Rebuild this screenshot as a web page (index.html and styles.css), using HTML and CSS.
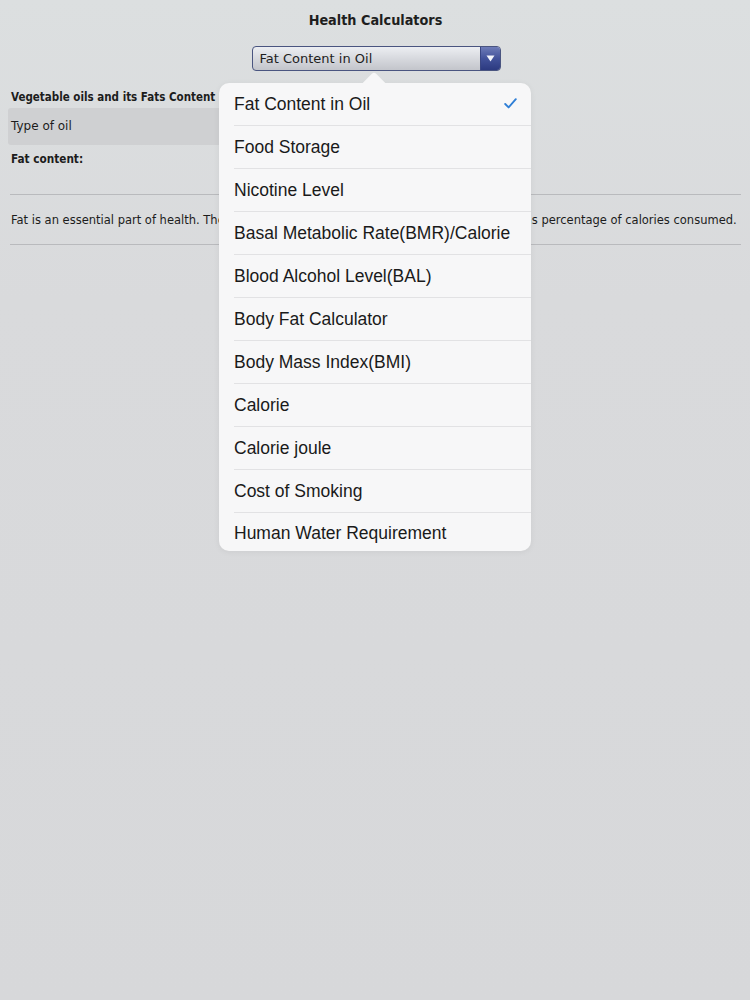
FILE: index.html
```html
<!DOCTYPE html>
<html>
<head>
<meta charset="utf-8">
<link rel="stylesheet" href="styles.css">
</head>
<body>
<div class="page">
  <h1 class="title">Health Calculators</h1>
  <div class="select-wrap">
    <div class="select">
      <span class="select-text">Fat Content in Oil</span>
      <span class="select-btn"><svg width="9" height="7" viewBox="0 0 9 7"><path d="M0.5 0.5 H8.5 L4.5 6.5 Z" fill="#f2f4fa"/></svg></span>
    </div>
  </div>
  <div class="section-title">Vegetable oils and its Fats Content</div>
  <div class="row-grey">Type of oil</div>
  <div class="label">Fat content:</div>
  <div class="rule"></div>
  <p class="desc">Fat is an essential part of health. The recommended daily fat intake is usually expressed as percentage of calories consumed.</p>
  <div class="rule"></div>

  <div class="popover">
    <div class="pop-arrow"></div>
    <ul class="menu">
      <li class="item selected"><span>Fat Content in Oil</span><svg class="check" width="13" height="11" viewBox="0 0 13 11"><path d="M1.2 6 L4.6 9.4 L11.8 1.2" fill="none" stroke="#2f7fd6" stroke-width="1.9" stroke-linecap="round" stroke-linejoin="round"/></svg></li>
      <li class="item"><span>Food Storage</span></li>
      <li class="item"><span>Nicotine Level</span></li>
      <li class="item"><span>Basal Metabolic Rate(BMR)/Calorie</span></li>
      <li class="item"><span>Blood Alcohol Level(BAL)</span></li>
      <li class="item"><span>Body Fat Calculator</span></li>
      <li class="item"><span>Body Mass Index(BMI)</span></li>
      <li class="item"><span>Calorie</span></li>
      <li class="item"><span>Calorie joule</span></li>
      <li class="item"><span>Cost of Smoking</span></li>
      <li class="item last"><span>Human Water Requirement</span></li>
    </ul>
  </div>
</div>
</body>
</html>
```
FILE: styles.css
```css
html, body {
  margin: 0;
  padding: 0;
}
body {
  width: 750px;
  height: 1000px;
  background: linear-gradient(to bottom, #dcdfe0 0px, #d9dadc 300px, #d7d8da 1000px);
  font-family: "DejaVu Sans", sans-serif;
  color: #1c1c1c;
  overflow: hidden;
}
.page {
  position: relative;
  padding: 0 9px 0 10px;
  height: 1000px;
}
.title {
  margin: 0;
  padding-top: 11px;
  height: 24px;
  font-family: "DejaVu Sans Condensed", "DejaVu Sans", sans-serif;
  font-size: 14.3px;
  font-weight: bold;
  text-align: center;
  line-height: 18px;
  color: #1e1e1e;
}
.select-wrap {
  display: flex;
  justify-content: center;
  padding-top: 11px;
  height: 38px;
}
.select {
  box-sizing: border-box;
  width: 249px;
  height: 25px;
  margin-left: 1px;
  border: 1px solid #4a5580;
  border-radius: 4px;
  background: linear-gradient(to bottom, #eceef2 0%, #d9dbe0 45%, #c3c5cb 100%);
  display: flex;
  align-items: center;
  overflow: hidden;
}
.select-text {
  flex: 1;
  padding-left: 7px;
  font-size: 13px;
  color: #1e1e1e;
}
.select-btn {
  width: 19px;
  height: 100%;
  background: linear-gradient(to bottom, #6e7cb8 0%, #42529a 50%, #2c3a80 100%);
  border-left: 1px solid #3a4784;
  display: flex;
  align-items: center;
  justify-content: center;
}
.section-title {
  padding-left: 1px;
  font-family: "DejaVu Sans Condensed", "DejaVu Sans", sans-serif;
  font-size: 11.5px;
  font-weight: bold;
  line-height: 16px;
  height: 24px;
  padding-top: 5px;
  box-sizing: border-box;
}
.row-grey {
  width: 500px;
  height: 37px;
  margin-left: -2px;
  padding-left: 3px;
  background: #cfd0d2;
  border-radius: 3px;
  font-size: 12px;
  line-height: 37px;
  box-sizing: border-box;
}
.label {
  padding-left: 1px;
  font-family: "DejaVu Sans Condensed", "DejaVu Sans", sans-serif;
  font-size: 11.7px;
  font-weight: bold;
  line-height: 16px;
  padding-top: 6px;
  height: 49px;
  box-sizing: border-box;
}
.rule {
  height: 1px;
  background: #b9babd;
}
.desc {
  margin: 0;
  padding-left: 1px;
  padding-top: 2px;
  box-sizing: border-box;
  font-size: 11.5px;
  line-height: 47px;
  height: 49px;
  white-space: nowrap;
  overflow: hidden;
}
.popover {
  position: absolute;
  left: 219px;
  top: 83px;
  width: 312px;
  height: 468px;
  background: #f7f7f8;
  border-radius: 10px;
  box-shadow: 0 1px 6px rgba(0,0,0,0.06);
  font-family: "Liberation Sans", Arial, sans-serif;
}
.pop-arrow {
  position: absolute;
  left: 147px;
  top: -8px;
  width: 16px;
  height: 16px;
  background: #f7f7f8;
  transform: rotate(45deg);
  border-radius: 3px 0 0 0;
}
.menu {
  position: relative;
  list-style: none;
  margin: 0;
  padding: 0;
  height: 100%;
  overflow: hidden;
  border-radius: 10px;
}
.item {
  height: 43px;
  margin-left: 15px;
  border-bottom: 1px solid #e2e2e4;
  box-sizing: border-box;
  display: flex;
  align-items: center;
  padding-top: 1px;
  font-size: 17.5px;
  color: #1a1a1a;
}
.item span {
  flex: 1;
}
.item.last {
  border-bottom: none;
  height: 40px;
}
.check {
  margin-right: 14px;
  margin-top: -2px;
}
```
